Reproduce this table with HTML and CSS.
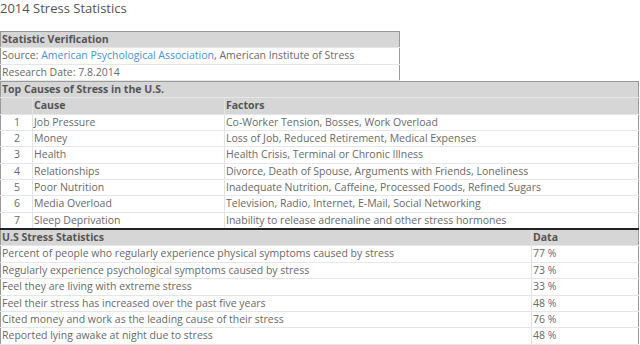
FILE: index.html
```html
<!DOCTYPE html>
<html>
<head>
<meta charset="utf-8">
<link rel="stylesheet" href="styles.css">
</head>
<body>
<h1 class="title">2014 Stress Statistics</h1>
<table class="tbl t-verify">
  <tr class="head"><td>Statistic Verification</td></tr>
  <tr><td>Source: <a class="link" href="#">American Psychological Association</a>, American Institute of Stress</td></tr>
  <tr><td>Research Date: 7.8.2014</td></tr>
</table>
<table class="tbl t-causes">
  <colgroup><col class="c-num"><col class="c-cause"><col></colgroup>
  <tr class="head"><td colspan="3">Top Causes of Stress in the U.S.</td></tr>
  <tr class="head sub"><td></td><td>Cause</td><td>Factors</td></tr>
  <tr><td class="num">1</td><td>Job Pressure</td><td>Co-Worker Tension, Bosses, Work Overload</td></tr>
  <tr><td class="num">2</td><td>Money</td><td>Loss of Job, Reduced Retirement, Medical Expenses</td></tr>
  <tr><td class="num">3</td><td>Health</td><td>Health Crisis, Terminal or Chronic Illness</td></tr>
  <tr><td class="num">4</td><td>Relationships</td><td>Divorce, Death of Spouse, Arguments with Friends, Loneliness</td></tr>
  <tr><td class="num">5</td><td>Poor Nutrition</td><td>Inadequate Nutrition, Caffeine, Processed Foods, Refined Sugars</td></tr>
  <tr><td class="num">6</td><td>Media Overload</td><td>Television, Radio, Internet, E-Mail, Social Networking</td></tr>
  <tr><td class="num">7</td><td>Sleep Deprivation</td><td>Inability to release adrenaline and other stress hormones</td></tr>
</table>
<table class="tbl t-stats">
  <colgroup><col class="c-stat"><col></colgroup>
  <tr class="head"><td>U.S Stress Statistics</td><td>Data</td></tr>
  <tr><td>Percent of people who regularly experience physical symptoms caused by stress</td><td>77 %</td></tr>
  <tr><td>Regularly experience psychological symptoms caused by stress</td><td>73 %</td></tr>
  <tr><td>Feel they are living with extreme stress</td><td>33 %</td></tr>
  <tr><td>Feel their stress has increased over the past five years</td><td>48 %</td></tr>
  <tr><td>Cited money and work as the leading cause of their stress</td><td>76 %</td></tr>
  <tr><td>Reported lying awake at night due to stress</td><td>48 %</td></tr>
</table>
</body>
</html>
```
FILE: styles.css
```css
html, body {
  margin: 0;
  padding: 0;
  background: #fff;
}
body {
  font-family: "Open Sans", "DejaVu Sans", sans-serif;
  color: #6a6a6a;
  font-size: 10.5px;
}
.title {
  margin: 0 0 15px 0;
  font-size: 13px;
  line-height: 16px;
  font-weight: normal;
  color: #555;
}
.tbl {
  border-collapse: collapse;
  table-layout: fixed;
  border: 1px solid #999;
}
.tbl td {
  padding: 0 0 0 1px;
  line-height: 15.35px;
  height: 15.35px;
  border-bottom: 1px solid #e6e6e6;
  white-space: nowrap;
  vertical-align: middle;
}
.head td {
  background: #d6d6d6;
  font-weight: bold;
  color: #555;
}
.t-verify {
  width: 400px;
}
.t-causes {
  width: 639px;
  border-top: 1px solid #999;
  border-bottom: 2px solid #222;
}
.t-causes td + td {
  border-left: 1px solid #e2e2e2;
}
.c-num { width: 32px; }
.c-cause { width: 192px; }
.num {
  text-align: center;
}
.t-stats {
  width: 639px;
  border-top: none;
}
.t-stats td + td {
  border-left: 1px solid #e2e2e2;
}
.c-stat { width: 531px; }
.link {
  color: #4a90d9;
  text-decoration: none;
}
```
